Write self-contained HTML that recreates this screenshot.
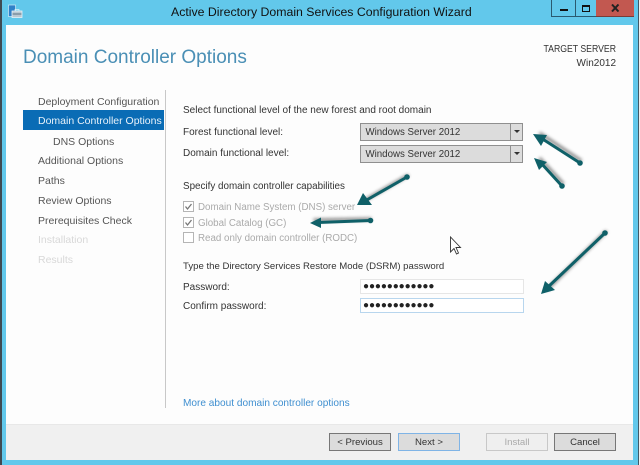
<!DOCTYPE html>
<html><head><meta charset="utf-8"><style>
html,body{margin:0;padding:0;background:#fff}
#w{position:relative;width:640px;height:465px;overflow:hidden;background:#62c8eb;font-family:"Liberation Sans",sans-serif;font-size:10px;color:#333}
#w div,#w span{position:absolute;white-space:nowrap}
.t{line-height:14px;height:14px}
.n{left:38px;color:#555;font-size:10.5px}
.d{color:#aaa;font-size:9.75px}
.c{width:9px;height:9px;left:183px;border:1px solid #b5b5b5;background:#fff;font-size:0}
.cb{left:360px;width:161px;height:16px;background:#dcdcdc;border:1.5px solid #8f8f8f}
.cb .x{left:4.5px;top:2px;line-height:14px;color:#333;font-size:9.7px}
.cb .s{left:149px;top:0;width:1px;height:16px;background:#8f8f8f}
.cb .a{left:153px;top:6px;width:0;height:0;border:3px solid transparent;border-top:3px solid #333;border-bottom:0}
.p{left:360px;width:162px;height:13px;background:#fff;border:1px solid #e6e6e6;line-height:14px;color:#222}
.p span{left:2px;top:0;font-size:10px;letter-spacing:-.1px}
.b{top:433px;width:60px;height:16px;border:1.5px solid #777;background:#dcdcdc;text-align:center;line-height:18px;color:#333;font-size:9.6px}
</style></head><body>
<div id="w">
<div style="left:0;top:0;width:1.5px;height:465px;background:#3f4a52"></div>
<div style="left:638px;top:0;width:1px;height:465px;background:#3f5a68"></div>
<div style="left:639px;top:0;width:1px;height:465px;background:#f0f0f0"></div>
<div style="left:6px;top:25px;width:627px;height:435px;background:#fdfdfd"></div>
<div style="left:6px;top:424px;width:627px;height:36px;background:#f0f0f0;border-top:1px solid #e8e8e8;box-sizing:border-box"></div>

<svg style="position:absolute;left:8px;top:4px" width="15" height="15" viewBox="0 0 15 15"><rect x=".5" y="1" width="7" height="11.500" fill="#2f80c8" stroke="#cfeaf6" stroke-width=".7"/><rect x="4" y="7" width="10" height="6.500" fill="#b9c8d2" stroke="#e6f2f8" stroke-width=".8"/><rect x="4.500" y="9.500" width="9" height="1" fill="#5c7284"/><rect x="7" y="5.500" width="4" height="1.500" fill="none" stroke="#e6f2f8" stroke-width=".7"/></svg>
<div class="t" style="left:171px;top:5px;font-size:12.3px;color:#111">Active Directory Domain Services Configuration Wizard</div>

<div style="left:551px;top:0;width:23px;height:16px;border:1px solid #2a5a70;border-top:0;border-right:0"></div>
<div style="left:575px;top:0;width:21px;height:16px;border:1px solid #2a5a70;border-top:0;border-right:0"></div>
<div style="left:596px;top:0;width:38px;height:17px;background:#c25850;border-bottom:1px solid #7a3b36;box-sizing:border-box"></div>
<div style="left:560px;top:9px;width:8px;height:2px;background:#111"></div>
<div style="left:582px;top:5px;width:6px;height:4px;border:1px solid #111;border-top-width:2px"></div>
<svg style="position:absolute;left:611px;top:4px" width="9" height="8" viewBox="0 0 9 8"><path d="M1 .5L7.500 7.500M7.500 .5L1 7.500" stroke="#222" stroke-width="2"/></svg>

<div style="left:23px;top:44px;font-size:19px;line-height:28px;color:#4a8fb5">Domain Controller Options</div>
<div class="t" style="left:480px;width:136px;text-align:right;top:43px;color:#333;font-size:10px;transform:scaleX(.87);transform-origin:right center">TARGET SERVER</div>
<div class="t" style="left:480px;width:136px;text-align:right;top:57px;color:#333;font-size:10px">Win2012</div>

<div style="left:165px;top:90px;width:1px;height:318px;background:#c8c8c8"></div>
<div style="left:23px;top:110px;width:141px;height:20px;background:#0a6cb5"></div>

<div class="t n" style="top:95px">Deployment Configuration</div>
<div class="t n" style="top:114px;color:#e8f2fa">Domain Controller Options</div>
<div class="t n" style="top:134.500px;left:53px">DNS Options</div>
<div class="t n" style="top:154px">Additional Options</div>
<div class="t n" style="top:174px">Paths</div>
<div class="t n" style="top:194px">Review Options</div>
<div class="t n" style="top:213.500px">Prerequisites Check</div>
<div class="t n" style="top:233px;color:#d8d8d8">Installation</div>
<div class="t n" style="top:253px;color:#d8d8d8">Results</div>

<div class="t" style="left:183px;top:104px">Select functional level of the new forest and root domain</div>
<div class="t" style="left:183px;top:126px">Forest functional level:</div>
<div class="t" style="left:183px;top:147px">Domain functional level:</div>

<div class="cb" style="top:123px"><span class="x">Windows Server 2012</span><span class="s"></span><span class="a"></span></div>
<div class="cb" style="top:145px"><span class="x">Windows Server 2012</span><span class="s"></span><span class="a"></span></div>

<div class="t" style="left:183px;top:180px;font-size:9.85px">Specify domain controller capabilities</div>

<div class="c" style="top:201px"></div>
<div class="c" style="top:217px"></div>
<div class="c" style="top:232px"></div>
<svg style="position:absolute;left:183px;top:201px" width="11" height="27" viewBox="0 0 11 27"><path d="M2.500 5.500L4.500 8L8.500 3M2.500 21.500L4.500 24L8.500 19" fill="none" stroke="#777" stroke-width="1.300"/></svg>
<div class="t d" style="left:198px;top:201px">Domain Name System (DNS) server</div>
<div class="t d" style="left:198px;top:217px">Global Catalog (GC)</div>
<div class="t d" style="left:198px;top:232px">Read only domain controller (RODC)</div>

<div class="t" style="left:183px;top:260px;font-size:9.6px">Type the Directory Services Restore Mode (DSRM) password</div>
<div class="t" style="left:183px;top:281px">Password:</div>
<div class="t" style="left:183px;top:300px">Confirm password:</div>
<div class="p" style="top:279px"><span>●●●●●●●●●●●●</span></div>
<div class="p" style="top:298px;border-color:#b8d6ee"><span>●●●●●●●●●●●●</span></div>

<div class="t" style="left:183px;top:397px;color:#3f8fd0;font-size:10.1px">More about domain controller options</div>

<div class="b" style="left:329px">&lt; Previous</div>
<div class="b" style="left:398px;border-color:#7fb4e6">Next &gt;</div>
<div class="b" style="left:486px;border-color:#c8c8c8;background:#efefef;color:#aaa">Install</div>
<div class="b" style="left:554px">Cancel</div>

<svg style="position:absolute;left:0;top:0" width="640" height="465" viewBox="0 0 640 465">
<defs><filter id="bl" x="-30%" y="-30%" width="160%" height="160%"><feGaussianBlur stdDeviation="1.500"/></filter></defs>
<g stroke="#666" fill="#666" stroke-width="3" filter="url(#bl)" opacity=".8" transform="translate(1.500,-2)">
<path d="M580 163L538 135"/><path d="M562 186L538 160"/><path d="M407 177L362 203"/><path d="M370 221L312 222"/><path d="M605 233L545 292"/>
</g>
<g stroke="#0f6068" fill="#0f6068" stroke-width="3">
<path d="M580 163L541 138"/><circle cx="580" cy="163" r="2.800" stroke="none"/>
<path d="M533 134L547 135L541 146Z" stroke="none"/>
<path d="M562 186L541 163"/><circle cx="562" cy="186" r="2.800" stroke="none"/>
<path d="M534 158L547 162L539 170Z" stroke="none"/>
<path d="M407 177L365 201"/><circle cx="407" cy="177" r="2.800" stroke="none"/>
<path d="M357 205L363 193L372 205Z" stroke="none"/>
<path d="M371 220.500L318 222.500"/><circle cx="370.500" cy="220.500" r="2.800" stroke="none"/>
<path d="M310 223L321 217.500L321 228Z" stroke="none"/>
<path d="M605 233L548 287"/><circle cx="605" cy="233" r="2.800" stroke="none"/>
<path d="M541 294L545 281L555 290Z" stroke="none"/>
</g>
<path d="M450.500 237V252L454 248.500L456.500 254L458.500 253L456 247.500H460.500Z" fill="#fff" stroke="#333" stroke-width=".9"/>
</svg>
</div>
</body></html>
